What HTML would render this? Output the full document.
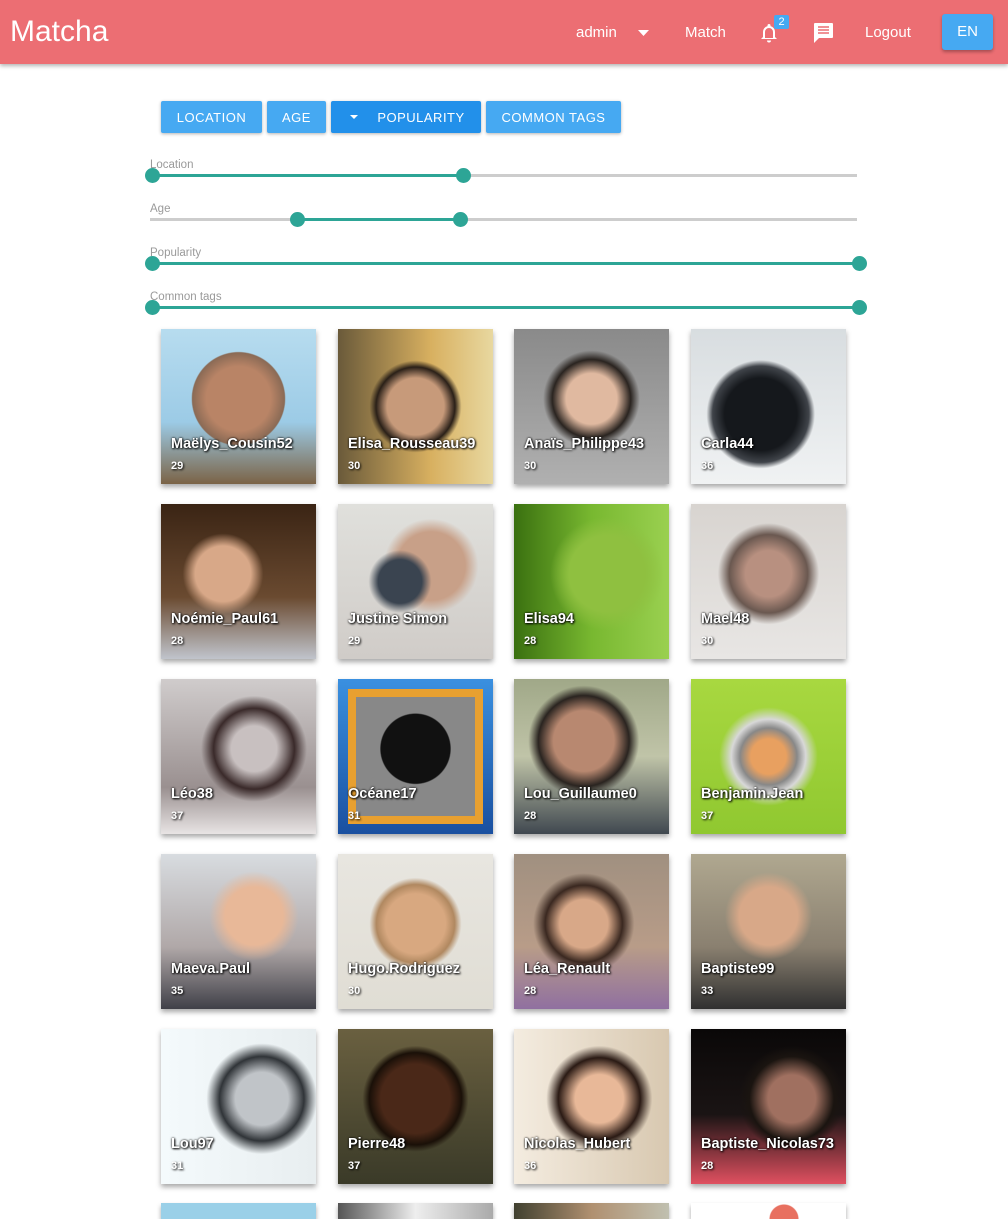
<!DOCTYPE html>
<html><head><meta charset="utf-8">
<style>
*{box-sizing:border-box;margin:0;padding:0}
html{width:1008px;height:1219px;overflow:hidden}
body{width:1008px;height:1219px;overflow:hidden;background:#fff;font-family:"Liberation Sans",Arial,sans-serif;position:relative}
.bar{position:absolute;left:0;top:0;width:1008px;height:64px;background:#ec6e73;box-shadow:0 2px 4px rgba(0,0,0,.3);color:#fff}
.logo{position:absolute;left:10px;top:15px;font-size:30px}
.nav{position:absolute;top:24px;font-size:15px}
.en{position:absolute;left:942px;top:14px;width:51px;height:36px;background:#46a9f2;border-radius:3px;box-shadow:0 2px 3px rgba(0,0,0,.3);text-align:center;line-height:36px;font-size:15px}
.badge{position:absolute;left:774px;top:15px;width:15px;height:14px;background:#46a9f2;font-size:11px;text-align:center;line-height:14px;border-radius:2px}
.btn{position:absolute;top:101px;height:32px;background:#46a9f2;color:#fff;font-size:13px;letter-spacing:.5px;line-height:33px;text-align:center;border-radius:2px;box-shadow:0 1px 3px rgba(0,0,0,.3)}
.lbl{position:absolute;left:150px;font-size:11.5px;color:#9a9a9a}
.track{position:absolute;left:150px;width:707px;height:3px;background:#cdcdcd}
.fill{position:absolute;height:3px;background:#2da596}
.th{position:absolute;width:15px;height:15px;border-radius:50%;background:#2da596}
.card{position:absolute;width:155px;height:155px;box-shadow:0 3px 5px rgba(0,0,0,.35);overflow:hidden}
.card .n{position:absolute;left:10px;top:107px;color:#fff;font-weight:bold;font-size:14.5px;text-shadow:1px 1px 2px #000,0 0 2px #000;white-space:nowrap}
.card .a{position:absolute;left:10px;top:131px;color:#fff;font-weight:bold;font-size:11px;text-shadow:1px 1px 2px #000}
</style></head><body>
<div class="bar">
<div class="logo">Matcha</div>
<div class="nav" style="left:576px">admin</div>
<svg style="position:absolute;left:638px;top:30px" width="11" height="6"><path d="M0 0h11L5.5 6z" fill="#fff"/></svg>
<div class="nav" style="left:685px">Match</div>
<svg style="position:absolute;left:759px;top:22px" width="20" height="22" viewBox="0 0 20 22"><path d="M10 2a1.5 1.5 0 0 1 1.5 1.5v.6A6 6 0 0 1 16 10v5l2 2H2l2-2v-5a6 6 0 0 1 4.5-5.9v-.6A1.5 1.5 0 0 1 10 2zM6 10v6h8v-6a4 4 0 0 0-8 0zM8 18.5h4a2 2 0 0 1-4 0z" fill="#fff"/></svg>
<div class="badge">2</div>
<svg style="position:absolute;left:813px;top:22px" width="21" height="21" viewBox="0 0 21 21"><path d="M2 1h17a1 1 0 0 1 1 1v13a1 1 0 0 1-1 1H6l-5 5V2a1 1 0 0 1 1-1z" fill="#fff"/><path d="M5 5h11M5 8h11M5 11h11" stroke="#ec6e73" stroke-width="1.6"/></svg>
<div class="nav" style="left:865px">Logout</div>
<div class="en">EN</div>
</div>

<div class="btn" style="left:161px;width:101px">LOCATION</div>
<div class="btn" style="left:267px;width:59px">AGE</div>
<div class="btn" style="left:331px;width:150px;background:#2290ea"><svg style="position:absolute;left:19px;top:14px" width="8" height="4"><path d="M0 0h8L4 4z" fill="#fff"/></svg><span style="margin-left:30px">POPULARITY</span></div>
<div class="btn" style="left:486px;width:135px">COMMON TAGS</div>

<div class="lbl" style="top:159px">Location</div>
<div class="track" style="top:174px"></div><div class="fill" style="left:152px;width:311px;top:174px"></div>
<div class="th" style="left:145px;top:168px"></div><div class="th" style="left:456px;top:168px"></div>

<div class="lbl" style="top:203px">Age</div>
<div class="track" style="top:218px"></div><div class="fill" style="left:297px;width:163px;top:218px"></div>
<div class="th" style="left:290px;top:212px"></div><div class="th" style="left:453px;top:212px"></div>

<div class="lbl" style="top:247px">Popularity</div>
<div class="fill" style="left:150px;width:709px;top:262px"></div>
<div class="th" style="left:145px;top:256px"></div><div class="th" style="left:852px;top:256px"></div>

<div class="lbl" style="top:291px">Common tags</div>
<div class="fill" style="left:150px;width:709px;top:306px"></div>
<div class="th" style="left:145px;top:300px"></div><div class="th" style="left:852px;top:300px"></div>

<div class="card" style="left:161px;top:329px;background:radial-gradient(circle at 50% 45%,#b98466 0 28%,#8a6a55 40%,transparent 41%),linear-gradient(#b7dcef,#9ccbe6 60%,#7b6346)"><div class="n">Maëlys_Cousin52</div><div class="a">29</div></div>
<div class="card" style="left:338px;top:329px;background:radial-gradient(circle at 50% 50%,#c79a7a 0 26%,#2a2018 36%,transparent 42%),linear-gradient(90deg,#6a5a3a,#d8b060 60%,#e8d8a0)"><div class="n">Elisa_Rousseau39</div><div class="a">30</div></div>
<div class="card" style="left:514px;top:329px;background:radial-gradient(circle at 50% 45%,#e0b9a0 0 22%,#2a2420 34%,transparent 42%),linear-gradient(#8a8a8a,#b0b0b0)"><div class="n">Anaïs_Philippe43</div><div class="a">30</div></div>
<div class="card" style="left:691px;top:329px;background:radial-gradient(ellipse at 45% 55%,#15181c 0 30%,#40444a 40%,transparent 45%),linear-gradient(#d8dde0,#f0f2f3)"><div class="n">Carla44</div><div class="a">36</div></div>
<div class="card" style="left:161px;top:504px;background:radial-gradient(circle at 40% 45%,#d8a888 0 22%,transparent 32%),linear-gradient(#3a2414,#6a4a30 60%,#c0c4cc)"><div class="n">Noémie_Paul61</div><div class="a">28</div></div>
<div class="card" style="left:338px;top:504px;background:radial-gradient(circle at 40% 50%,#3a4450 0 18%,transparent 26%),radial-gradient(circle at 60% 40%,#c8a088 0 26%,transparent 36%),linear-gradient(#e0e0dc,#d0ccc8)"><div class="n">Justine Simon</div><div class="a">29</div></div>
<div class="card" style="left:514px;top:504px;background:radial-gradient(circle at 60% 45%,#8fc040 0 30%,transparent 45%),linear-gradient(90deg,#3a7010,#78b830 50%,#9ad050)"><div class="n">Elisa94</div><div class="a">28</div></div>
<div class="card" style="left:691px;top:504px;background:radial-gradient(circle at 50% 45%,#b89080 0 20%,#6a5850 34%,transparent 44%),linear-gradient(#d8d4d0,#e8e6e4)"><div class="n">Mael48</div><div class="a">30</div></div>
<div class="card" style="left:161px;top:679px;background:radial-gradient(circle at 60% 45%,#c8c0c0 0 18%,#3a2a2a 32%,transparent 42%),linear-gradient(#d0cccc,#9a9090 70%,#e8e4e4)"><div class="n">Léo38</div><div class="a">37</div></div>
<div class="card" style="left:338px;top:679px;background:radial-gradient(circle at 50% 45%,#111 0 30%,transparent 31%),linear-gradient(#888 0 0) 18px 18px/119px 119px no-repeat,linear-gradient(#e8a030 0 0) 10px 10px/135px 135px no-repeat,linear-gradient(#3a90e0,#1a50a0)"><div class="n">Océane17</div><div class="a">31</div></div>
<div class="card" style="left:514px;top:679px;background:radial-gradient(circle at 45% 40%,#b88870 0 24%,#2a2420 36%,transparent 44%),linear-gradient(#a0a888,#c0c4a8 50%,#404850)"><div class="n">Lou_Guillaume0</div><div class="a">28</div></div>
<div class="card" style="left:691px;top:679px;background:radial-gradient(circle at 50% 50%,#e8a060 0 16%,#888 26%,#d8d8d8 34%,transparent 45%),linear-gradient(#a8d840,#90c830)"><div class="n">Benjamin.Jean</div><div class="a">37</div></div>
<div class="card" style="left:161px;top:854px;background:radial-gradient(circle at 60% 40%,#e8b898 0 22%,transparent 34%),linear-gradient(#d8dce0,#b0a8a8 60%,#404048)"><div class="n">Maeva.Paul</div><div class="a">35</div></div>
<div class="card" style="left:338px;top:854px;background:radial-gradient(circle at 50% 45%,#d8a880 0 26%,#b08860 34%,transparent 40%),linear-gradient(#e8e6e0,#e0ddd4)"><div class="n">Hugo.Rodriguez</div><div class="a">30</div></div>
<div class="card" style="left:514px;top:854px;background:radial-gradient(circle at 45% 45%,#d8a888 0 20%,#3a2820 32%,transparent 42%),linear-gradient(#a09080,#b89c88 60%,#9070a0)"><div class="n">Léa_Renault</div><div class="a">28</div></div>
<div class="card" style="left:691px;top:854px;background:radial-gradient(circle at 50% 40%,#d8a888 0 24%,transparent 36%),linear-gradient(#b0a890,#8a8070 60%,#303030)"><div class="n">Baptiste99</div><div class="a">33</div></div>
<div class="card" style="left:161px;top:1029px;background:radial-gradient(circle at 65% 45%,#c0c4c8 0 20%,#303438 32%,transparent 42%),linear-gradient(90deg,#f4fafc,#e8eef0)"><div class="n">Lou97</div><div class="a">31</div></div>
<div class="card" style="left:338px;top:1029px;background:radial-gradient(circle at 50% 45%,#4a2818 0 30%,#1a1008 40%,transparent 46%),linear-gradient(#6a6040,#3a3a28)"><div class="n">Pierre48</div><div class="a">37</div></div>
<div class="card" style="left:514px;top:1029px;background:radial-gradient(circle at 55% 45%,#e8b898 0 20%,#2a1a14 34%,transparent 44%),linear-gradient(90deg,#f4ece0,#d8c8b0)"><div class="n">Nicolas_Hubert</div><div class="a">36</div></div>
<div class="card" style="left:691px;top:1029px;background:radial-gradient(circle at 65% 45%,#a07060 0 18%,#1a1410 32%,transparent 40%),linear-gradient(#0a0808,#1a1414 55%,#e05060)"><div class="n">Baptiste_Nicolas73</div><div class="a">28</div></div>
<div class="card" style="left:161px;top:1203px;height:16px;background:#9ad0e8"></div>
<div class="card" style="left:338px;top:1203px;height:16px;background:linear-gradient(90deg,#555,#eee 50%,#aaa)"></div>
<div class="card" style="left:514px;top:1203px;height:16px;background:linear-gradient(90deg,#404030,#b09070 50%,#c0c0b0)"></div>
<div class="card" style="left:691px;top:1203px;height:16px;background:radial-gradient(circle at 60% 100%,#e87060 0 14px,transparent 15px),#fff"></div>
</body></html>
